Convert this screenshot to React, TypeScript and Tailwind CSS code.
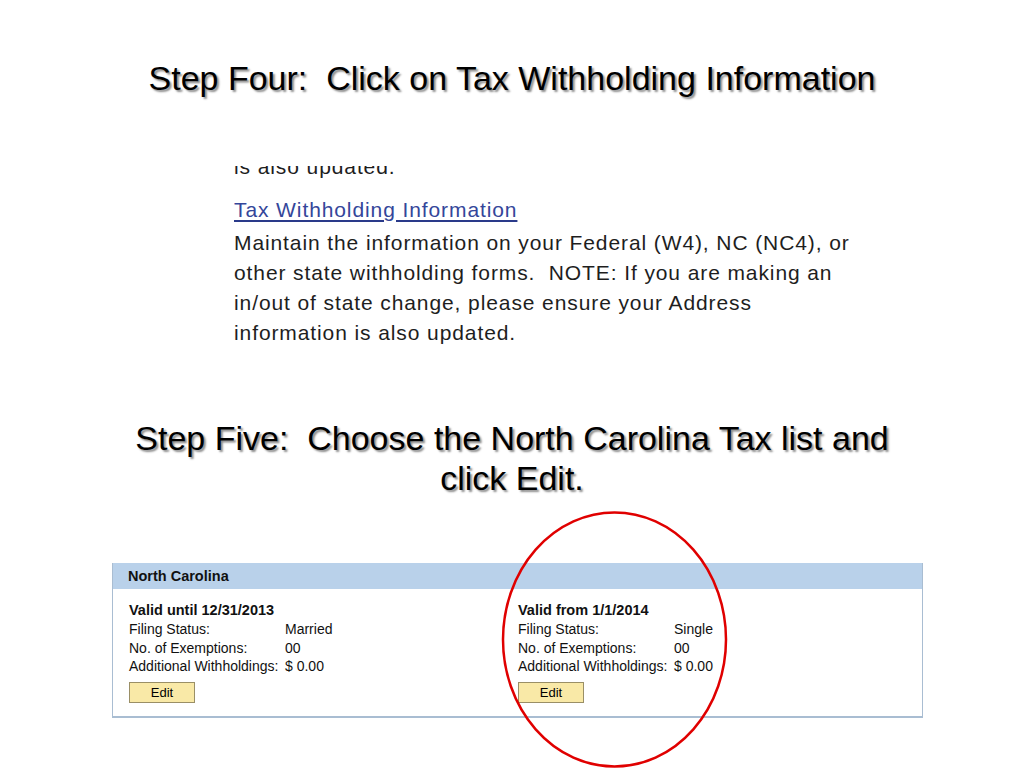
export default function App() {
  const sans = { fontFamily: '"Liberation Sans", Arial, sans-serif' };
  return (
    <div className="relative w-[1024px] h-[768px] bg-white overflow-hidden" style={sans}>
      <h1 className="pt-[58px] text-center text-[34px] leading-[40px] text-black whitespace-pre [text-shadow:2px_2px_2px_rgba(0,0,0,0.45)]">
        Step Four:  Click on Tax Withholding Information
      </h1>

      <div className="mt-[68px] ml-[234px] h-[184px] overflow-hidden text-[21px] leading-[30px] tracking-[0.9px] text-[#1e1e1e]">
        <div className="-mt-[14px] whitespace-nowrap">is also updated.</div>
        <div className="mt-[13px]">
          <span className="text-[#34469a] underline decoration-[#2a3a8a] underline-offset-[3px]">Tax Withholding Information</span>
        </div>
        <div className="mt-[3px] w-[680px] whitespace-pre">
          {"Maintain the information on your Federal (W4), NC (NC4), or\nother state withholding forms.  NOTE: If you are making an\nin/out of state change, please ensure your Address\ninformation is also updated."}
        </div>
      </div>

      <h2 className="mt-[68px] text-center text-[34px] leading-[40px] text-black whitespace-pre [text-shadow:2px_2px_2px_rgba(0,0,0,0.45)]">
        {"Step Five:  Choose the North Carolina Tax list and\nclick Edit."}
      </h2>

      <div className="mt-[65px] ml-[112px] w-[811px] border-x border-b-2 border-[#a9bdd2] text-[14px] text-[#111]">
        <div className="h-[26px] bg-[#b9d1ea] pl-[15px] pt-[2px] flex items-center font-bold text-[14.5px]">North Carolina</div>
        <div className="grid grid-cols-[389px_1fr] pl-[16px] pt-[11px] pb-[13px]">
          {[
            { title: "Valid until 12/31/2013", status: "Married" },
            { title: "Valid from 1/1/2014", status: "Single" },
          ].map((c) => (
            <div key={c.title}>
              <div className="font-bold text-[14.5px] leading-[20px]">{c.title}</div>
              <div className="grid grid-cols-[156px_1fr] leading-[18.5px]">
                <span>Filing Status:</span>
                <span>{c.status}</span>
                <span>No. of Exemptions:</span>
                <span>00</span>
                <span>Additional Withholdings:</span>
                <span>$ 0.00</span>
              </div>
              <button className="mt-[6px] w-[66px] h-[21px] bg-[#f9e9a7] border border-[#9a8f66] text-[13px] leading-none text-black">
                Edit
              </button>
            </div>
          ))}
        </div>
      </div>

      <svg className="absolute left-0 top-0 pointer-events-none" width="1024" height="768">
        <ellipse cx="614.5" cy="639.5" rx="111.5" ry="127" fill="none" stroke="#e00000" strokeWidth="2.5" />
      </svg>
    </div>
  );
}
